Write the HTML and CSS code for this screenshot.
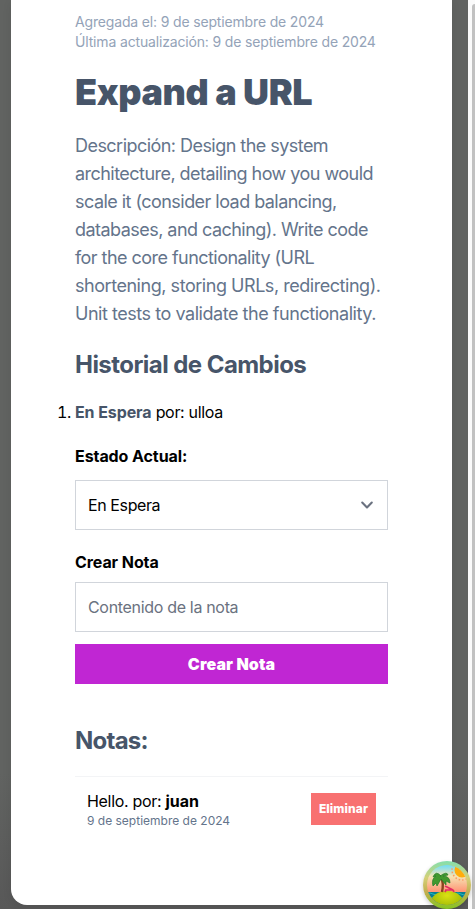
FILE: index.html
```html
<!DOCTYPE html>
<html lang="es">
<head>
<meta charset="utf-8">
<title>Expand a URL</title>
<link rel="stylesheet" href="styles.css">
</head>
<body>
<div class="overlay">
  <main class="panel">
    <p class="meta">Agregada el: 9 de septiembre de 2024</p>
    <p class="meta">Última actualización: 9 de septiembre de 2024</p>
    <h1 class="title">Expand a URL</h1>
    <p class="description"><span class="intro">Descripción: Design the system<br>architecture, detailing how you would<br>scale it (consider load balancing,<br>databases, and caching). Write code<br>for the core functionality (URL</span><br>shortening, storing URLs, redirecting).<br>Unit tests to validate the functionality.</p>
    <h2 class="heading">Historial de Cambios</h2>
    <ol class="history">
      <li><b class="state">En Espera</b> por: ulloa</li>
    </ol>
    <div class="label label-state">Estado Actual:</div>
    <div class="field select">
      <span>En Espera</span>
      <svg width="24" height="24" viewBox="0 0 20 20" fill="none" stroke="#6b7280" stroke-width="1.75" stroke-linecap="round" stroke-linejoin="round"><path d="M6 8l4 4 4-4"/></svg>
    </div>
    <div class="label label-note">Crear Nota</div>
    <div class="field placeholder"><span>Contenido de la nota</span></div>
    <button class="submit">Crear Nota</button>
    <h2 class="heading notes-heading">Notas:</h2>
    <div class="note">
      <div>
        <p class="note-text">Hello. por: <b>juan</b></p>
        <p class="note-date">9 de septiembre de 2024</p>
      </div>
      <button class="delete">Eliminar</button>
    </div>
  </main>
</div>
<div class="scroll-track"><div class="thumb"></div></div>
<div class="badge">
  <svg width="48" height="48" viewBox="0 0 48 48">
    <defs>
      <linearGradient id="sky" x1="0" y1="0" x2="0" y2="1"><stop offset="0" stop-color="#70ddf5"/><stop offset=".28" stop-color="#f5e5b5"/><stop offset=".65" stop-color="#ff9878"/></linearGradient>
      <linearGradient id="ring" x1="0" y1="0" x2="0" y2="1"><stop offset="0" stop-color="#83dfad"/><stop offset=".35" stop-color="#d5d078"/><stop offset=".65" stop-color="#c2ae50"/><stop offset="1" stop-color="#84c522"/></linearGradient>
      <radialGradient id="sand" cx=".5" cy=".2" r=".8"><stop offset="0" stop-color="#dce112"/><stop offset="1" stop-color="#84a900"/></radialGradient>
      <clipPath id="scene"><circle cx="24" cy="24" r="20"/></clipPath>
    </defs>
    <circle cx="24" cy="24" r="24" fill="url(#ring)"/>
    <g clip-path="url(#scene)">
      <path fill="url(#sky)" d="M4 4h40v40H4z"/>
      <circle cx="39" cy="9" r="10" fill="none" stroke="#ff9860" stroke-width="1.5" stroke-dasharray="1.5 2"/>
      <circle cx="39" cy="9" r="7.5" fill="#ffad0b"/>
      <path fill="#087e91" d="M4 31h40v13H4z"/>
      <path d="M4 33q3-2 6 0t6 0m16 0q3-2 6 0t6 0M4 37q3-2 6 0t6 0m18 0q3-2 6 0t6 0" fill="none" stroke="#22b7bd"/>
      <ellipse cx="24" cy="41" rx="16" ry="11" fill="url(#sand)"/>
      <path d="M18 16q3 6 1 15" fill="none" stroke="#88451f" stroke-width="2.4"/>
      <path d="M18 15Q13 9 10 16l3-1q-5 3-3 10l3-3 1 3 4-7 5 6v-4l4 2q0-7-7-7l5-1q-1-4-8 1Z" fill="#42992e" stroke="#247b29" stroke-width=".7"/>
      <path d="M22 25l8 4h-8m8 0 1 2m-8-2-1 2" fill="none" stroke="#e32b62" stroke-width="1.7"/>
    </g>
  </svg>
</div>
</body>
</html>
```
FILE: styles.css
```css
* { box-sizing: border-box; }
body { margin: 0; height: 909px; overflow: hidden; display: flex; background: #fafafa; color: #000; font: 16px/24px Inter, sans-serif; }
p, h1, h2, ol { margin: 0; padding: 0; }
button { border: 0; border-radius: 0; padding: 0; font-family: inherit; color: #fff; }
.overlay { width: 468px; height: 909px; padding: 0 16px 4px 11px; background: linear-gradient(#616361 85%, #585858); }
.panel { height: 905px; padding: 12px 64px 0; background: #fff; border-radius: 0 0 16px 16px; box-shadow: 0 3px 10px #00000014; }
.meta { font-size: 14px; line-height: 20px; letter-spacing: -.16px; color: #94a3b8; white-space: nowrap; }
.title { margin-top: 20px; font-size: 36px; line-height: 40px; letter-spacing: -.38px; font-weight: 900; color: #475569; white-space: nowrap; }
.description { margin-top: 20px; font-size: 18px; line-height: 28px; letter-spacing: -.46px; color: #64748b; white-space: nowrap; }
.intro { letter-spacing: -.54px; }
.heading { margin-top: 21px; font-size: 24px; line-height: 32px; letter-spacing: -.55px; font-weight: 700; color: #475569; white-space: nowrap; }
.history { margin-top: 19px; letter-spacing: -.32px; }
.state { color: #475569; letter-spacing: -.1px; }
.label { font-weight: 700; letter-spacing: -.08px; }
.label-state { margin-top: 20px; }
.label-note { margin-top: 20px; }
.field { height: 50px; border: 1px solid #d1d5db; padding: 0 8px 0 12px; display: flex; align-items: center; justify-content: space-between; letter-spacing: -.32px; }
.select { margin-top: 12px; letter-spacing: -.4px; }
.placeholder { margin-top: 8px; color: #6b7280; }
.submit { display: block; width: 100%; height: 40px; margin-top: 12px; background: #c026d3; font-size: 16px; letter-spacing: .1px; font-weight: 900; }
.notes-heading { margin-top: 41px; letter-spacing: -.75px; }
.note { display: flex; justify-content: space-between; margin-top: 19px; padding: 12px; border-top: 1px solid #f3f4f6; }
.note-text { letter-spacing: -.3px; }
.note-text b { letter-spacing: -.1px; }
.note-date { font-size: 12px; line-height: 16px; color: #64748b; }
.delete { width: 65px; height: 32px; margin-top: 4px; padding-bottom: 1px; background: #f87171; font-size: 12px; letter-spacing: .1px; font-weight: 800; }
.scroll-track { width: 7px; height: 909px; padding: 4px 0 0 4px; }
.thumb { height: 905px; background: #c1c1c1; border-radius: 3px 0 0 0; }
.badge { position: absolute; left: 423px; top: 861px; width: 48px; height: 48px; border-radius: 50%; box-shadow: 0 2px 4px #0003; }
```
